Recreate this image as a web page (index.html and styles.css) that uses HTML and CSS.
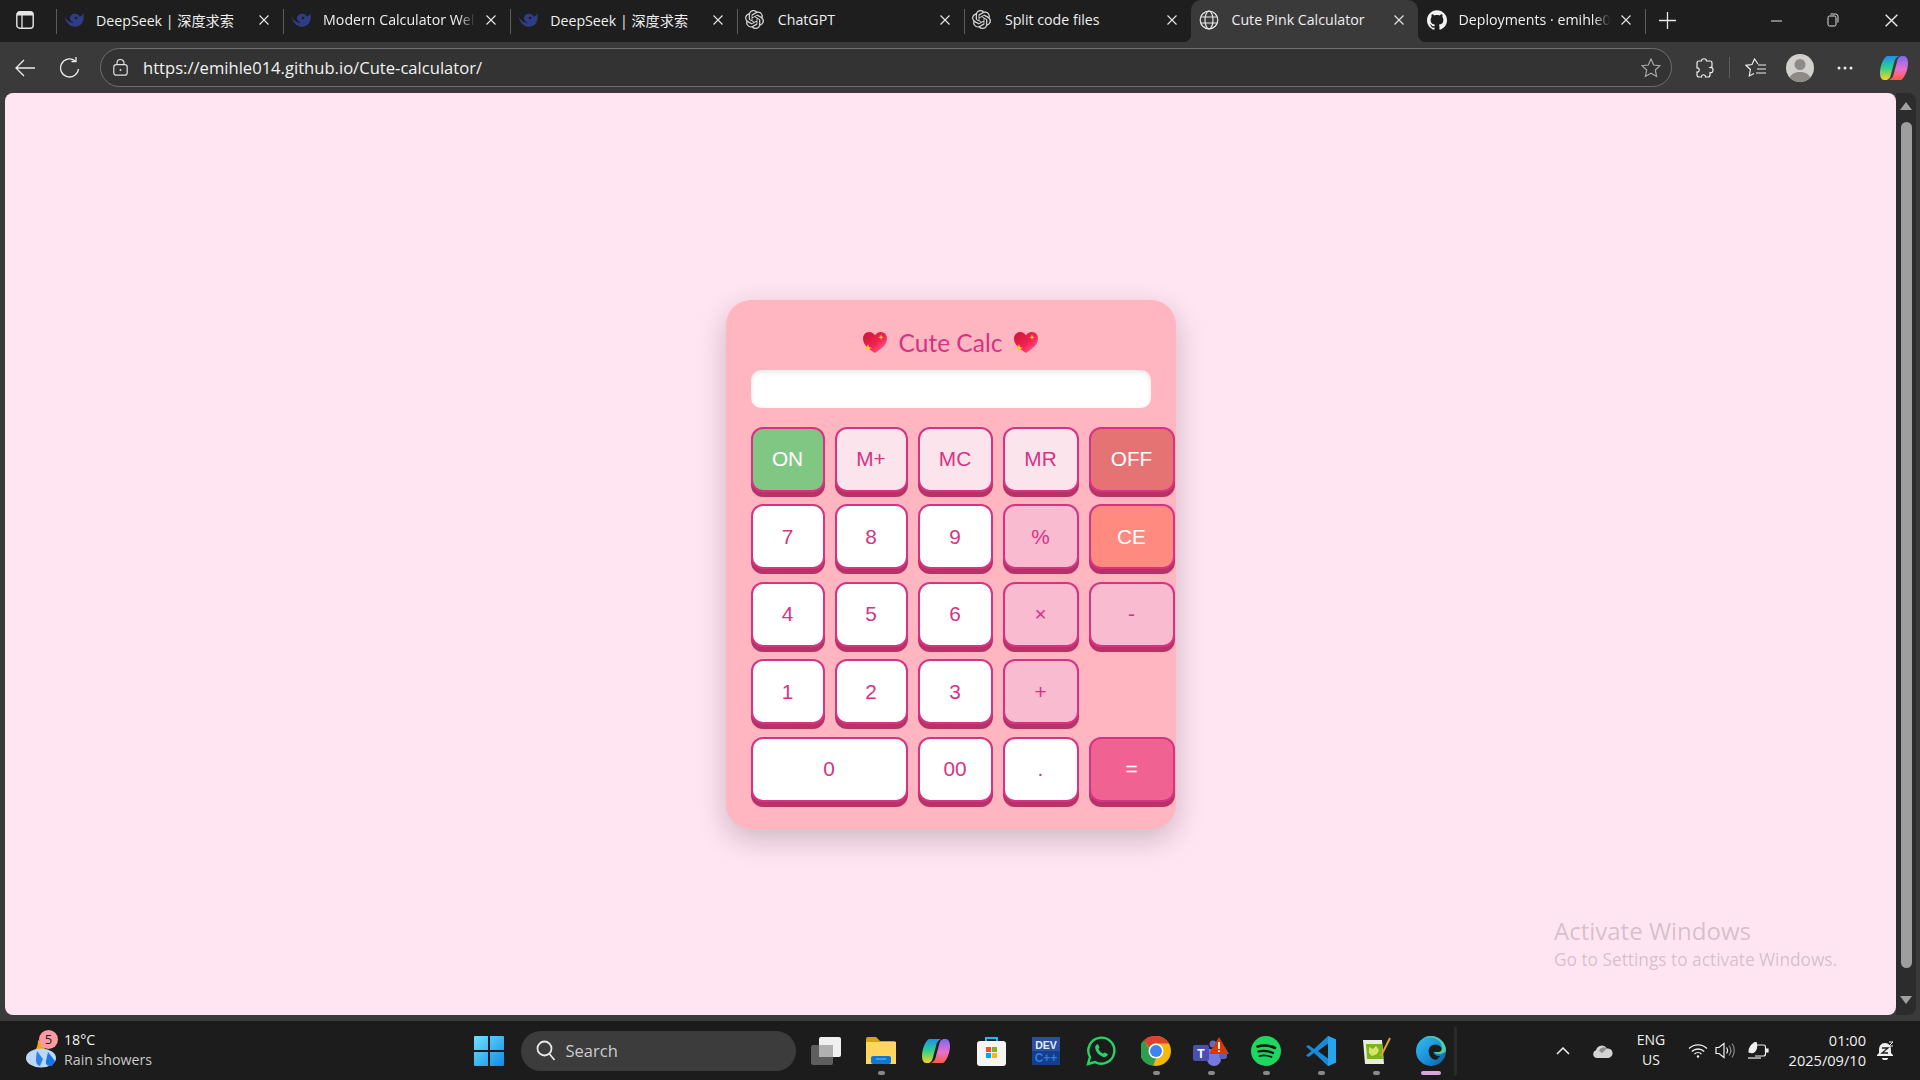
FILE: index.html
```html
<!DOCTYPE html>
<html lang="en">
<head>
    <meta charset="UTF-8">
    <meta name="viewport" content="width=device-width, initial-scale=1.0">
    <title>Cute Pink Calculator</title>
    <link rel="stylesheet" href="styles.css">
</head>
<body>
    <svg class="defs" width="0" height="0">
        <defs>
            <symbol id="whale" viewBox="0 0 24 20">
                <path d="M.5 5.500c1.500 7 5.500 11.500 11 12.500 5.500.8 10-2 11.500-7 .8-3 .8-6 .5-9-1 2-2.800 3.500-4.500 4-1-2.200-3-3.500-5.500-3.500C9.500 2.500 7 5 7.200 8.300c.3 2.700 2.400 4.700 4.800 4.700-3.500 1-8.500-2-11.500-7.500z" fill="#2f3d86"/>
                <circle cx="14.500" cy="7.500" r="1.500" fill="#1e1e1e"/>
            </symbol>
            <symbol id="gpt" viewBox="0 0 24 24">
                <path fill="#d8d8d8" d="M22.282 9.821a5.985 5.985 0 0 0-.516-4.91 6.046 6.046 0 0 0-6.51-2.9A6.065 6.065 0 0 0 4.981 4.18a5.985 5.985 0 0 0-3.998 2.9 6.046 6.046 0 0 0 .743 7.097 5.98 5.98 0 0 0 .51 4.911 6.051 6.051 0 0 0 6.515 2.9A5.985 5.985 0 0 0 13.26 24a6.056 6.056 0 0 0 5.772-4.206 5.99 5.99 0 0 0 3.997-2.9 6.056 6.056 0 0 0-.747-7.073zM13.26 22.43a4.476 4.476 0 0 1-2.876-1.04l.141-.081 4.779-2.758a.795.795 0 0 0 .392-.681v-6.737l2.02 1.168a.071.071 0 0 1 .038.052v5.583a4.504 4.504 0 0 1-4.494 4.494zM3.6 18.304a4.47 4.47 0 0 1-.535-3.014l.142.085 4.783 2.759a.771.771 0 0 0 .78 0l5.843-3.369v2.332a.08.08 0 0 1-.033.062L9.74 19.95a4.5 4.5 0 0 1-6.14-1.646zM2.34 7.896a4.485 4.485 0 0 1 2.366-1.973V11.6a.766.766 0 0 0 .388.676l5.815 3.355-2.02 1.168a.076.076 0 0 1-.071 0l-4.83-2.786A4.504 4.504 0 0 1 2.34 7.872zm16.597 3.855l-5.833-3.387L15.119 7.2a.076.076 0 0 1 .071 0l4.83 2.791a4.494 4.494 0 0 1-.676 8.105v-5.678a.79.79 0 0 0-.407-.667zm2.01-3.023l-.141-.085-4.774-2.782a.776.776 0 0 0-.785 0L9.409 9.23V6.897a.066.066 0 0 1 .028-.061l4.83-2.787a4.5 4.5 0 0 1 6.68 4.66zm-12.64 4.135l-2.02-1.164a.08.08 0 0 1-.038-.057V6.075a4.5 4.5 0 0 1 7.375-3.453l-.142.08L8.704 5.46a.795.795 0 0 0-.393.681zm1.097-2.365l2.602-1.5 2.607 1.5v2.999l-2.597 1.5-2.607-1.500z"/>
            </symbol>
            <symbol id="close" viewBox="0 0 10 10">
                <path d="M.5.500l9 9M9.500.500l-9 9" stroke="#e8e8e8" stroke-width="1.100" fill="none"/>
            </symbol>
            <symbol id="heart" viewBox="0 0 24 22">
                <path d="M12 21C6 17 0 13 0 6.500 0 2.800 2.800 0 6.300 0 8.700 0 10.800 1.300 12 3.300 13.200 1.300 15.300 0 17.700 0 21.200 0 24 2.800 24 6.500 24 13 18 17 12 21z" fill="url(#heartFill)"/>
                <path d="M5 12l1 3 3 1-3 1-1 4-1-4-3-1 3-1zM18 2.500l.7 2 2 .7-2 .7-.7 2-.7-2-2-.7 2-.7z" fill="#ffc83d"/>
            </symbol>
            <linearGradient id="heartFill" x1="0" y1="0" x2="1" y2="1">
                <stop offset="0" stop-color="#c8143c"/>
                <stop offset=".55" stop-color="#f5224f"/>
                <stop offset="1" stop-color="#ff6fb5"/>
            </linearGradient>
            <linearGradient id="copilotA" x1="0" y1="0" x2="0" y2="1">
                <stop offset="0" stop-color="#1b8ff0"/>
                <stop offset=".5" stop-color="#2fd28a"/>
                <stop offset="1" stop-color="#ffd21f"/>
            </linearGradient>
            <linearGradient id="copilotB" x1="0" y1="0" x2="0" y2="1">
                <stop offset="0" stop-color="#7a6af0"/>
                <stop offset=".55" stop-color="#e86fd0"/>
                <stop offset="1" stop-color="#ff5a3c"/>
            </linearGradient>
            <symbol id="copilot" viewBox="0 0 28 26">
                <path d="M7 1h12l-1.500 1C15.500 3 14.800 5 14.300 7L10.800 20c-.6 2.500-2 5-5 5H4C1.500 25 0 22 0 18 0 12 3 3 7 1z" fill="url(#copilotA)"/>
                <path d="M21 25H9l1.500-1c2-1 2.700-3 3.200-5L17.200 6c.6-2.500 2-5 5-5H24c2.500 0 4 3 4 7 0 6-3 15-7 17z" fill="url(#copilotB)"/>
            </symbol>
            <linearGradient id="edgeFill" x1="0" y1="0" x2="1" y2="1">
                <stop offset="0" stop-color="#35c1f1"/>
                <stop offset=".55" stop-color="#1b8fd8"/>
                <stop offset="1" stop-color="#0c59a4"/>
            </linearGradient>
        </defs>
    </svg>

    <header class="tabstrip">
        <div class="sidebar-btn">
            <svg width="18" height="18" viewBox="0 0 18 18"><rect x=".8" y=".8" width="16.400" height="16.400" rx="3" fill="none" stroke="#e6e6e6" stroke-width="1.400"/><path d="M1 1h16v3.500H1z" fill="#e6e6e6"/><path d="M6 4v13" stroke="#e6e6e6" stroke-width="1.300"/></svg>
        </div>
        <div class="tab sep">
            <svg class="favicon" viewBox="0 0 24 20"><use href="#whale"/></svg>
            <span class="tab-title">DeepSeek | 深度求索</span>
            <svg class="tab-close"><use href="#close"/></svg>
        </div>
        <div class="tab sep">
            <svg class="favicon" viewBox="0 0 24 20"><use href="#whale"/></svg>
            <span class="tab-title fade">Modern Calculator Wel</span>
            <svg class="tab-close"><use href="#close"/></svg>
        </div>
        <div class="tab sep">
            <svg class="favicon" viewBox="0 0 24 20"><use href="#whale"/></svg>
            <span class="tab-title">DeepSeek | 深度求索</span>
            <svg class="tab-close"><use href="#close"/></svg>
        </div>
        <div class="tab sep">
            <svg class="favicon small"><use href="#gpt"/></svg>
            <span class="tab-title">ChatGPT</span>
            <svg class="tab-close"><use href="#close"/></svg>
        </div>
        <div class="tab sep">
            <svg class="favicon small"><use href="#gpt"/></svg>
            <span class="tab-title">Split code files</span>
            <svg class="tab-close"><use href="#close"/></svg>
        </div>
        <div class="tab active">
            <svg class="favicon" viewBox="0 0 20 20" fill="none" stroke="#e8e8e8" stroke-width="1.200"><circle cx="10" cy="10" r="8.800"/><ellipse cx="10" cy="10" rx="4" ry="8.800"/><path d="M1.800 7h16.400M1.800 13h16.400"/></svg>
            <span class="tab-title">Cute Pink Calculator</span>
            <svg class="tab-close"><use href="#close"/></svg>
        </div>
        <div class="tab">
            <svg class="favicon" viewBox="0 0 24 24"><path fill="#f2f2f2" d="M12 .297c-6.630 0-12 5.373-12 12 0 5.303 3.438 9.800 8.205 11.385.600.113.820-.258.820-.577 0-.285-.010-1.040-.015-2.040-3.338.724-4.042-1.610-4.042-1.610C4.422 18.070 3.633 17.700 3.633 17.700c-1.087-.744.084-.729.084-.729 1.205.084 1.838 1.236 1.838 1.236 1.070 1.835 2.809 1.305 3.495.998.108-.776.417-1.305.760-1.605-2.665-.300-5.466-1.332-5.466-5.930 0-1.310.465-2.380 1.235-3.220-.135-.303-.540-1.523.105-3.176 0 0 1.005-.322 3.300 1.230.960-.267 1.980-.399 3-.405 1.020.006 2.040.138 3 .405 2.280-1.552 3.285-1.230 3.285-1.230.645 1.653.240 2.873.120 3.176.765.840 1.230 1.910 1.230 3.220 0 4.610-2.805 5.625-5.475 5.920.420.360.810 1.096.810 2.220 0 1.606-.015 2.896-.015 3.286 0 .315.210.690.825.570C20.565 22.092 24 17.592 24 12.297c0-6.627-5.373-12-12-12"/></svg>
            <span class="tab-title fade">Deployments · emihle0</span>
            <svg class="tab-close"><use href="#close"/></svg>
        </div>
        <div class="tab-end"></div>
        <svg class="new-tab" width="17" height="17" viewBox="0 0 17 17"><path d="M8.500 0v17M0 8.500h17" stroke="#e8e8e8" stroke-width="1.300"/></svg>
        <div class="win-controls">
            <svg width="11" height="11" viewBox="0 0 11 11"><path d="M0 6h11" stroke="#e0e0e0" stroke-width="1"/></svg>
            <svg width="12" height="14" viewBox="0 0 12 14" fill="none" stroke="#e0e0e0"><rect x="1" y="3" width="8" height="10" rx="1.500"/><path d="M3.500 1h5a2.500 2.500 0 0 1 2.500 2.500v6"/></svg>
            <svg width="13" height="13" viewBox="0 0 10 10"><use href="#close"/></svg>
        </div>
    </header>

    <nav class="toolbar">
        <div class="tool">
            <svg width="20" height="18" viewBox="0 0 20 18" fill="none" stroke="#ececec" stroke-width="1.300"><path d="M20 9H1M9 1L1 9l8 8"/></svg>
        </div>
        <div class="tool">
            <svg width="21" height="21" viewBox="0 0 21 21" fill="none" stroke="#ececec" stroke-width="1.300"><path d="M18.500 12a9 9 0 1 1-3.500-8.200"/><path d="M16 0v4.500h-4.500"/></svg>
        </div>
        <div class="address">
            <svg width="15" height="17" viewBox="0 0 15 17" fill="none" stroke="#e0e0e0" stroke-width="1.200"><rect x=".8" y="5.600" width="13.400" height="10.600" rx="2.500"/><path d="M4 5.500V4a3.500 3.500 0 0 1 7 0v1.500"/><circle cx="7.500" cy="11" r="1" fill="#e0e0e0" stroke="none"/></svg>
            <span class="url">https://emihle014.github.io/Cute-calculator/</span>
            <svg class="star" width="20" height="20" viewBox="0 0 20 20" fill="none" stroke="#a8a8a8" stroke-width="1.200"><path d="M10 1l2.700 6 6.300.7-4.700 4.300 1.300 6.400L10 15.200l-5.600 3.200L5.700 12 1 7.700 7.300 7z"/></svg>
        </div>
        <div class="tool ext">
            <svg width="19" height="20" viewBox="0 0 19 20" fill="none" stroke="#ececec" stroke-width="1.200"><path d="M6.500 3c0-3 5-3 5 0h3.500c1.500 0 2 1 2 2v3c0 1-1 2-2 1.500 2-.5 3 .5 3 2.500s-1 3-3 2.500v2.500c0 1.500-1 2-2 2h-2.500c.5-3-4.500-3-4 0H4c-1.500 0-2-1-2-2v-3c3 .5 3-4.500 0-4V5c0-1 .5-2 2-2z"/></svg>
        </div>
        <i class="tool-divider"></i>
        <div class="tool">
            <svg width="21" height="20" viewBox="0 0 21 20" fill="none" stroke="#ececec" stroke-width="1.200"><path d="M13 6L9.500 1 7 6.500 1 7.300l4.400 4.200L4.300 18l4.700-2.500"/><path d="M13 7h8M12 11h9M11 15h10"/></svg>
        </div>
        <div class="tool">
            <svg width="28" height="28" viewBox="0 0 28 28"><circle cx="14" cy="14" r="14" fill="#d2d0cc"/><circle cx="14" cy="10.500" r="5.500" fill="#8e8b87"/><path d="M3.800 23.500C5.500 19.500 9.500 18 14 18s8.500 1.500 10.200 5.500A14 14 0 0 1 14 28a14 14 0 0 1-10.200-4.500z" fill="#8e8b87"/></svg>
        </div>
        <div class="tool">
            <svg width="16" height="4" viewBox="0 0 16 4" fill="#ececec"><circle cx="2" cy="2" r="1.500"/><circle cx="8" cy="2" r="1.500"/><circle cx="14" cy="2" r="1.500"/></svg>
        </div>
        <div class="tool copilot-btn">
            <svg width="28" height="26"><use href="#copilot"/></svg>
        </div>
    </nav>

    <main class="viewport">
        <div class="page">
            <div class="calculator">
                <h1 class="calc-title">
                    <svg class="heart"><use href="#heart"/></svg>
                    <span>Cute Calc</span>
                    <svg class="heart"><use href="#heart"/></svg>
                </h1>
                <div class="display"></div>
                <div class="keys">
                    <button class="key key-on">ON</button>
                    <button class="key key-mem">M+</button>
                    <button class="key key-mem">MC</button>
                    <button class="key key-mem">MR</button>
                    <button class="key key-off">OFF</button>
                    <button class="key">7</button>
                    <button class="key">8</button>
                    <button class="key">9</button>
                    <button class="key key-op">%</button>
                    <button class="key key-ce">CE</button>
                    <button class="key">4</button>
                    <button class="key">5</button>
                    <button class="key">6</button>
                    <button class="key key-op">×</button>
                    <button class="key key-op">-</button>
                    <button class="key">1</button>
                    <button class="key">2</button>
                    <button class="key">3</button>
                    <button class="key key-op">+</button>
                    <span></span>
                    <button class="key key-zero">0</button>
                    <button class="key">00</button>
                    <button class="key">.</button>
                    <button class="key key-eq">=</button>
                </div>
            </div>
            <div class="watermark">
                <div class="wm-title">Activate Windows</div>
                <div class="wm-sub">Go to Settings to activate Windows.</div>
            </div>
        </div>
        <div class="scrollbar">
            <i class="arrow-up"></i>
            <div class="thumb"></div>
            <i class="arrow-down"></i>
        </div>
    </main>

    <footer class="taskbar">
        <div class="weather">
            <div class="weather-icon">
                <svg width="32" height="34" viewBox="0 0 32 34"><path d="M2 20c6 0 11-4 11-14 5 3 8 8 7 14z" fill="#f4a31c"/><ellipse cx="16" cy="24" rx="15" ry="9.500" fill="#bcd8f7"/><path d="M12 17l6 8-3 7c-4-1-5-4-3-15z" fill="#2f80ea"/><path d="M23 18l7 9-3 5c-4 0-7-1-6-5z" fill="#1a73e8"/></svg>
                <span class="badge">5</span>
            </div>
            <div class="weather-text">
                <div class="temp">18°C</div>
                <div class="cond">Rain showers</div>
            </div>
        </div>
        <svg class="start" width="30" height="30" viewBox="0 0 30 30"><defs><linearGradient id="winFill" x1="0" y1="0" x2="1" y2="1"><stop offset="0" stop-color="#6fe2ff"/><stop offset="1" stop-color="#0f8be6"/></linearGradient></defs><path d="M0 1a1 1 0 0 1 1-1h13v14H0zM16 0h13a1 1 0 0 1 1 1v13H16zM0 16h14v14H1a1 1 0 0 1-1-1zM16 16h14v13a1 1 0 0 1-1 1H16z" fill="url(#winFill)"/></svg>
        <div class="search">
            <svg width="20" height="21" viewBox="0 0 20 21" fill="none" stroke="#e8e8e8" stroke-width="1.800"><circle cx="8.500" cy="8.500" r="7"/><path d="M13.500 14l5 6"/></svg>
            <span>Search</span>
        </div>
        <div class="apps">
            <div class="app">
                <svg width="30" height="28" viewBox="0 0 30 28"><rect y="8" width="22" height="20" rx="2" fill="#5e5e5e"/><rect x="8" width="22" height="20" rx="2" fill="#f0f0f0"/><rect x="8" y="8" width="14" height="12" fill="#b0b0b0"/></svg>
            </div>
            <div class="app running">
                <svg width="30" height="27" viewBox="0 0 30 27"><path d="M0 2a2 2 0 0 1 2-2h8l4 4h14a2 2 0 0 1 2 2v3H0z" fill="#d9a30f"/><path d="M0 5h30v22H0z" fill="#ffd75e"/><rect x="5" y="19" width="20" height="8" rx="2" fill="#0f78d4"/><path d="M10 22h10" stroke="#7cc4f5"/></svg>
            </div>
            <div class="app">
                <svg width="28" height="26"><use href="#copilot"/></svg>
            </div>
            <div class="app">
                <svg width="29" height="30" viewBox="0 0 29 30"><path d="M9 5V2h11v3" fill="none" stroke="#29b6f0" stroke-width="2"/><rect y="5" width="29" height="25" rx="3" fill="#f5f5f5"/><path d="M9 11h5v5H9z" fill="#f25022"/><path d="M15 11h5v5h-5z" fill="#7fba00"/><path d="M9 17h5v5H9z" fill="#00a4ef"/><path d="M15 17h5v5h-5z" fill="#ffb900"/></svg>
            </div>
            <div class="app">
                <svg width="28" height="28" viewBox="0 0 28 28"><rect width="28" height="28" fill="#153f8a"/><rect width="28" height="14" fill="#2a4f9e"/><text x="14" y="12" text-anchor="middle" class="dev-a">DEV</text><text x="14" y="25" text-anchor="middle" class="dev-b">C++</text></svg>
            </div>
            <div class="app">
                <svg width="30" height="30" viewBox="0 0 30 30"><path d="M2 28l2-7a13 13 0 1 1 5 5z" fill="none" stroke="#25d366" stroke-width="2.400"/><path d="M10 9c1-1 2-1 2.500 0l1 2.500-1 1.500c1 2 2.500 3.500 4.500 4.500l1.500-1 2.500 1c1 .5 1 1.500 0 2.500-2 2-5 1-8-1.500S8 11 10 9z" fill="#25d366"/></svg>
            </div>
            <div class="app running">
                <svg width="30" height="30" viewBox="0 0 30 30"><circle cx="15" cy="15" r="15" fill="#f2b90c"/><path d="M15 0a15 15 0 0 1 13 7.500H15A7.500 7.500 0 0 0 8 12L3 4A15 15 0 0 1 15 0z" fill="#de4032"/><path d="M3 4l6.500 11.500a6 6 0 0 0 6 6L12 29.700A15 15 0 0 1 3 4z" fill="#2f9e4f"/><circle cx="15" cy="15" r="7.500" fill="#fff"/><circle cx="15" cy="15" r="6" fill="#3f83f0"/></svg>
            </div>
            <div class="app running">
                <svg width="36" height="30" viewBox="0 0 36 30"><circle cx="20" cy="8" r="3.500" fill="#6268c4"/><path d="M14 13h14v10a7 7 0 0 1-14 0z" fill="#7479dc"/><rect x="26" y="13" width="8" height="10" rx="3" fill="#5a5fc0"/><rect y="9" width="16" height="16" rx="2" fill="#4a50b0"/><text x="8" y="22" text-anchor="middle" class="teams-t">T</text><path d="M26 1l10 17H16z" fill="#d83b01"/><path d="M26 6v7M26 14.500v1.500" stroke="#fff" stroke-width="1.800"/></svg>
            </div>
            <div class="app running">
                <svg width="30" height="30" viewBox="0 0 30 30" fill="none" stroke="#111" stroke-linecap="round"><circle cx="15" cy="15" r="15" fill="#1ed760" stroke="none"/><path d="M6.500 10.500c6-1.600 12-1.200 17.500 1.500" stroke-width="2.600"/><path d="M7.500 15.500c5-1.200 10-.8 14.500 1.500" stroke-width="2.200"/><path d="M8.500 20c4-1 8-.6 12 1" stroke-width="1.800"/></svg>
            </div>
            <div class="app running">
                <svg width="30" height="30" viewBox="0 0 30 30"><path d="M22 0l8 3.500v23L22 30 8 17 2.500 21 0 19.500 5.500 15 0 10.500 2.500 9 8 13z" fill="#1b8ad6"/><path d="M22 7.500L12 15l10 7.500z" fill="#1c1c1c"/><path d="M22 0l8 3.500v23L22 30z" fill="#26a4ee"/></svg>
            </div>
            <div class="app running">
                <svg width="29" height="28" viewBox="0 0 29 28"><path d="M1 3h19l2 24H3z" fill="#e6ece0"/><path d="M4 7h16l1 15H5z" fill="#7cb518"/><path d="M7 10l4 2 3-3 3 4-2 4-5 2-3-3z" fill="#d6e66a"/><path d="M19 19L28 1" stroke="#e0a030" stroke-width="2"/></svg>
            </div>
            <div class="app active-app">
                <svg width="30" height="30" viewBox="0 0 30 30"><circle cx="15" cy="15" r="15" fill="url(#edgeFill)"/><path d="M30 15A15 15 0 0 0 7 2.500C15-1 25 3 26 11c.5 4-4 6-8 4.500 1 3 8 4 12-.5z" fill="#4fd0a0"/><path d="M13 17c-1.500-5 2.500-9 7-8.500 3.500.4 6 3 5.500 5.500-.3 1.500-2 2-4 2h-4c.2 2.500 3 4.200 6.500 4l-3 3.500c-4 1-7.500-2-8-6.500z" fill="#1c1c1c"/></svg>
            </div>
        </div>
        <i class="apps-end"></i>
        <div class="tray">
            <div class="tray-cell chev">
                <svg width="14" height="8" viewBox="0 0 14 8" fill="none" stroke="#f0f0f0" stroke-width="1.500"><path d="M1 7l6-6 6 6"/></svg>
            </div>
            <div class="tray-cell cloud">
                <svg width="20" height="14" viewBox="0 0 20 14"><path d="M4 14a4 4 0 0 1-1-7.800A6 6 0 0 1 14 4.500 4.800 4.800 0 0 1 15.500 14z" fill="#d4d4d4"/><path d="M6 7a5 5 0 0 1 8-2.500L9 9z" fill="#8c8c8c"/></svg>
            </div>
            <div class="tray-cell lang">
                <div>ENG</div>
                <div>US</div>
            </div>
            <div class="tray-cell wifi">
                <svg width="20" height="15" viewBox="0 0 20 15" fill="none" stroke="#f0f0f0" stroke-width="1.300"><path d="M1 5.500a13 13 0 0 1 18 0M3.800 8.500a9 9 0 0 1 12.400 0M6.500 11a5 5 0 0 1 7 0"/><circle cx="10" cy="13.500" r="1.200" fill="#f0f0f0" stroke="none"/></svg>
            </div>
            <div class="tray-cell speaker">
                <svg width="20" height="17" viewBox="0 0 20 17" fill="none" stroke="#f0f0f0" stroke-width="1.200"><path d="M1 5.500h3L9 1.500v14l-5-4H1z"/><path d="M11.500 5.500c1.300 1.800 1.300 4.200 0 6"/><path d="M14 3.500c2.300 3 2.300 7 0 10M17 1.500c3 4 3 10 0 14" stroke="#8a8a8a"/></svg>
            </div>
            <div class="tray-cell battery">
                <svg width="21" height="17" viewBox="0 0 21 17" fill="none" stroke="#f0f0f0" stroke-width="1.200"><path d="M8 3h7.500a2 2 0 0 1 2 2v7a2 2 0 0 1-2 2H7"/><path d="M18 7h2v3h-2" fill="#f0f0f0"/><path d="M1 10C1 5 4 2 8 0c1 4 1 7-1 9-1.500 1.500-3 2-4 1.500z" fill="#f0f0f0"/><path d="M0 16h13"/></svg>
            </div>
            <div class="tray-cell clock">
                <div>01:00</div>
                <div>2025/09/10</div>
            </div>
            <div class="tray-cell bell">
                <svg width="17" height="19" viewBox="0 0 17 19"><path d="M8 2C4 2 2 5 2 9v3l-2 2v1h16v-1l-2-2V9c0-4-2-7-6-7z" fill="#f0f0f0"/><path d="M5 17h6a3 2 0 0 1-6 0z" fill="#f0f0f0"/><path d="M5 7h6l-6 5h6" stroke="#1c1c1c" stroke-width="1.300" fill="none"/><path d="M12 1h4l-4 4h4" stroke="#f0f0f0" fill="none"/></svg>
            </div>
        </div>
    </footer>
</body>
</html>
```

FILE: styles.css
```css
* {
    box-sizing: border-box;
}
html, body {
    height: 100%;
}
body {
    margin: 0;
    width: 1920px;
    height: 1080px;
    overflow: hidden;
    display: flex;
    flex-direction: column;
    background-color: #3a3a3a;
    font-family: "Open Sans", "Noto Sans CJK SC", sans-serif;
    color: #f0f0f0;
}
.defs {
    position: absolute;
}

/* tab strip */
.tabstrip {
    height: 42px;
    flex: none;
    display: flex;
    align-items: stretch;
    background-color: #1e1e1e;
}
.sidebar-btn {
    width: 55.500px;
    flex: none;
    padding: 11px 0 0 16px;
}
.tab {
    position: relative;
    width: 227.100px;
    flex: none;
    display: flex;
    align-items: center;
    gap: 12px;
    padding: 0 14px 3px 8.500px;
    font-size: 14.200px;
    color: #efefef;
}
.tab.sep::before {
    content: "";
    position: absolute;
    left: 0;
    top: 9px;
    width: 1px;
    height: 25px;
    background-color: #5c5c5c;
}
.tab.active {
    background-color: #3a3a3a;
    border-radius: 10px 10px 0 0;
}
.tab.active::before,
.tab.active::after {
    content: "";
    position: absolute;
    bottom: 0;
    width: 8px;
    height: 8px;
}
.tab.active::before {
    left: -8px;
    background: radial-gradient(circle at 0 0, transparent 8px, #3a3a3a 8.500px);
}
.tab.active::after {
    right: -8px;
    background: radial-gradient(circle at 100% 0, transparent 8px, #3a3a3a 8.500px);
}
.favicon {
    width: 20px;
    height: 20px;
    flex: none;
}
.favicon.small {
    width: 19px;
    height: 19px;
    margin-right: 1.500px;
}
.tab-title {
    flex: 1;
    min-width: 0;
    white-space: nowrap;
}
.tab-title.fade {
    -webkit-mask-image: linear-gradient(90deg, #000 88%, transparent 99%);
    mask-image: linear-gradient(90deg, #000 88%, transparent 99%);
}
.tab-close {
    width: 10px;
    height: 10px;
    flex: none;
    margin-left: -3px;
}
.tab-end {
    width: 1px;
    height: 25px;
    margin-top: 9px;
    background-color: #5c5c5c;
}
.new-tab {
    margin: 12px 0 0 13px;
}
.win-controls {
    margin-left: auto;
    padding-right: 22.500px;
    margin-bottom: 2px;
    display: flex;
    align-items: center;
    gap: 45.500px;
}

/* toolbar */
.toolbar {
    height: 51px;
    flex: none;
    display: flex;
    align-items: center;
    gap: 5px;
    padding-left: 5px;
    background-color: #3a3a3a;
}
.tool {
    width: 40px;
    height: 40px;
    flex: none;
    display: flex;
    align-items: center;
    justify-content: center;
}
.tool.ext {
    margin-left: 7px;
}
.tool.copilot-btn {
    margin-left: 4px;
}
.tool-divider {
    width: 1px;
    height: 21px;
    background-color: #5c5c5c;
}
.address {
    width: 1572px;
    height: 39px;
    margin-left: 5px;
    flex: none;
    display: flex;
    align-items: center;
    padding: 0 10px 0 12px;
    border: 1px solid #6e6e6e;
    border-radius: 20px;
    background-color: #333;
}
.url {
    margin-left: 15px;
    font-size: 16.600px;
    color: #f2f2f2;
}
.star {
    margin-left: auto;
}

/* page area */
.viewport {
    height: 928px;
    flex: none;
    display: flex;
    align-items: flex-start;
    padding-left: 5px;
}
.page {
    position: relative;
    width: 1891px;
    height: 922px;
    flex: none;
    display: flex;
    align-items: center;
    justify-content: center;
    padding-top: 20px;
    border-radius: 8px;
    background-color: #ffe4f1;
    font-family: "Liberation Sans", Arial, sans-serif;
}
.calculator {
    width: 450px;
    height: 529px;
    padding: 25px;
    border-radius: 25px;
    background-color: #ffb6c1;
    box-shadow: 0 10px 30px rgba(0, 0, 0, 0.2);
}
.calc-title {
    height: 36px;
    margin: 0 0 9px;
    display: flex;
    align-items: center;
    justify-content: center;
    gap: 12px;
    font-family: Lato, "Open Sans", sans-serif;
    font-size: 24.500px;
    font-weight: normal;
    color: #d63384;
}
.heart {
    width: 24px;
    height: 22px;
}
.display {
    height: 38px;
    margin-bottom: 19px;
    border-radius: 10px;
    background-color: #fff;
    box-shadow: inset 0 2px 5px rgba(0, 0, 0, 0.1);
}
.keys {
    display: grid;
    grid-template-columns: 74px 73px 75px 76px 86px;
    grid-auto-rows: 65px;
    gap: 12.500px 10px;
}
.key {
    padding: 0;
    border: 2px solid #d63384;
    border-radius: 12px;
    background-color: #fff;
    box-shadow: 0 5px 0 #b83268;
    font-family: inherit;
    font-size: 20.800px;
    color: #d63384;
    cursor: pointer;
}
.key-on {
    background-color: #81c784;
    color: #fff;
}
.key-off {
    background-color: #e57373;
    color: #fff;
}
.key-ce {
    background-color: #ff8a80;
    color: #fff;
}
.key-eq {
    background-color: #f06292;
    color: #fff;
}
.key-mem {
    background-color: #fce4ec;
}
.key-op {
    background-color: #f8bbd0;
}
.key-zero {
    grid-column: span 2;
}
.watermark {
    position: absolute;
    left: 1549px;
    top: 823px;
    font-family: "Open Sans", sans-serif;
    color: rgba(70, 70, 70, 0.24);
}
.wm-title {
    font-size: 24px;
    line-height: 30px;
}
.wm-sub {
    font-size: 17.300px;
    line-height: 27px;
}

/* scrollbar */
.scrollbar {
    width: 20px;
    height: 922px;
    flex: none;
    padding: 9px 4px 0;
    border-radius: 0 8px 8px 0;
    background-color: #2c2c2c;
    display: flex;
    flex-direction: column;
    align-items: center;
}
.arrow-up {
    width: 0;
    height: 0;
    border-left: 6px solid transparent;
    border-right: 6px solid transparent;
    border-bottom: 8px solid #a0a0a0;
}
.thumb {
    width: 11px;
    height: 846px;
    margin-top: 12px;
    border-radius: 6px;
    background-color: #9e9e9e;
}
.arrow-down {
    width: 0;
    height: 0;
    margin-top: 28px;
    border-left: 6px solid transparent;
    border-right: 6px solid transparent;
    border-top: 8px solid #a0a0a0;
}

/* taskbar */
.taskbar {
    height: 59px;
    flex: none;
    display: flex;
    align-items: center;
    background-color: #1c1c1c;
    font-size: 14px;
}
.weather {
    width: 474px;
    flex: none;
    padding-left: 25px;
    display: flex;
    align-items: center;
    gap: 7px;
}
.weather-icon {
    position: relative;
    width: 32px;
    height: 34px;
}
.badge {
    position: absolute;
    left: 14px;
    top: -4px;
    width: 19px;
    height: 19px;
    border-radius: 50%;
    background-color: #ff9aa2;
    color: #222;
    font-size: 13px;
    line-height: 19px;
    text-align: center;
}
.weather-text {
    margin-bottom: 2px;
    line-height: 20px;
    font-size: 14.200px;
}
.cond {
    color: #c8c8c8;
}
.start {
    flex: none;
}
.search {
    width: 275px;
    height: 40px;
    margin-left: 17px;
    flex: none;
    display: flex;
    align-items: center;
    gap: 10px;
    padding-left: 14.500px;
    border-radius: 20px;
    background-color: #3c3c3c;
    color: #ccc;
    font-size: 16.500px;
}
.apps {
    margin-left: 2.500px;
    display: flex;
    align-self: stretch;
    flex: none;
}
.app {
    position: relative;
    width: 55px;
    flex: none;
    display: flex;
    align-items: center;
    justify-content: center;
}
.app.running::after,
.app.active-app::after {
    content: "";
    position: absolute;
    left: 50%;
    top: 50px;
    width: 7px;
    height: 4px;
    margin-left: -3.500px;
    border-radius: 2px;
    background-color: #8a8a8a;
}
.app.active-app::after {
    width: 20px;
    margin-left: -10px;
    background-color: #dfa0e6;
}
.dev-a {
    font: bold 10.500px "Liberation Sans", sans-serif;
    fill: #e8eef8;
}
.dev-b {
    font: bold 12px "Liberation Sans", sans-serif;
    fill: #2f7be0;
}
.teams-t {
    font: bold 12px "Liberation Sans", sans-serif;
    fill: #fff;
}
.apps-end {
    width: 3px;
    height: 50px;
    margin-left: -5px;
    border-radius: 0 6px 6px 0;
    background-color: #2a2a2a;
}
.tray {
    margin-left: auto;
    padding-right: 16px;
    display: flex;
    align-items: center;
    align-self: stretch;
}
.tray-cell {
    display: flex;
    align-items: center;
    justify-content: center;
}
.chev {
    width: 30px;
}
.cloud {
    width: 50px;
}
.lang {
    width: 46px;
    margin-right: 10px;
    margin-bottom: 2px;
    flex-direction: column;
    line-height: 20px;
}
.wifi {
    width: 28px;
}
.speaker {
    width: 26px;
}
.battery {
    width: 40px;
}
.clock {
    width: 88px;
    margin-bottom: 2px;
    flex-direction: column;
    align-items: flex-end;
    line-height: 20px;
    font-size: 14.600px;
}
.bell {
    width: 38px;
}
```
